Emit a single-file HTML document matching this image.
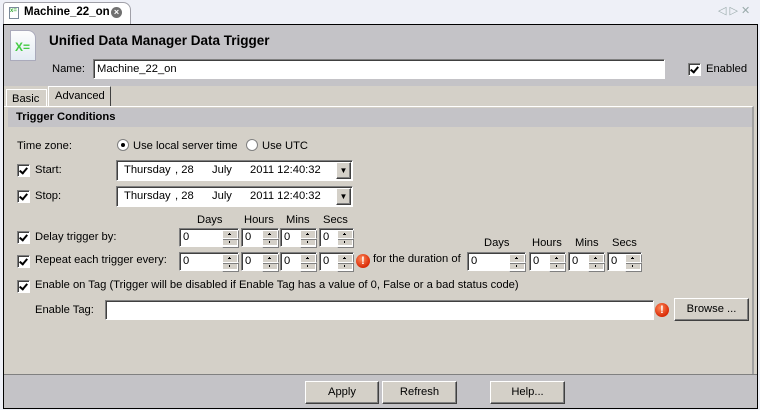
<!DOCTYPE html>
<html><head><style>
*{box-sizing:border-box;margin:0;padding:0}
body{width:760px;height:410px;position:relative;background:#eef0f7;font-family:"Liberation Sans",sans-serif;font-size:11.2px;color:#000;overflow:hidden}
.a{position:absolute;white-space:nowrap}
.in{position:absolute;background:#fff;border:1px solid;border-color:#808080 #fff #fff #808080;box-shadow:inset 1px 1px 0 #404040}
.cb{position:absolute;width:13px;height:13px;background:#fff;border:1px solid;border-color:#808080 #fff #fff #808080;box-shadow:inset 1px 1px 0 #404040}
.cb:after{content:"";position:absolute;left:3px;top:1px;width:3px;height:6px;border:solid #000;border-width:0 2px 2px 0;transform:rotate(40deg)}
.btn{position:absolute;background:#d4d0c8;border:1px solid;border-color:#fff #404040 #404040 #fff;box-shadow:inset -1px -1px 0 #808080;text-align:center;line-height:20px}
.sp{position:absolute;background:#fff;border:1px solid;border-color:#808080 #fff #fff #808080;box-shadow:inset 1px 1px 0 #404040;height:19px;padding-left:3px;line-height:17px}
.sp i{position:absolute;right:1px;top:1px;width:15px;height:15px;background:#d4d0c8}
.sp i:before,.sp i:after{content:"";position:absolute;left:0;width:15px;height:8px;border:1px solid;border-color:#fff #808080 #808080 #fff}
.sp i:before{top:0}.sp i:after{top:8px}
.sp u{position:absolute;right:7px;width:3px;height:1px;background:#000;z-index:2}
.sp u+u{width:1px;right:8px}
.warn{position:absolute;width:14px;height:14px;border-radius:50%;background:radial-gradient(circle at 40% 35%,#ff8a5a,#d92a06 70%);color:#fff;font-weight:bold;font-size:11px;text-align:center;line-height:14px}
</style></head><body>
<div class="a" style="left:3px;top:2px;width:128px;height:23px;background:#fff;border:1px solid #a0a0a8;border-bottom:none;border-radius:3px 8px 0 0"></div>
<div class="a" style="left:9px;top:7px;width:10px;height:12px;border:1px solid #7a8a9a;background:#fff"></div>
<div class="a" style="left:10px;top:8px;font-size:6px;color:#3a3;font-weight:bold">x=</div>
<div class="a" style="left:24px;top:6px;font-weight:bold;font-size:11.5px">Machine_22_on</div>
<div class="a" style="left:111px;top:7px;width:11px;height:11px;border-radius:50%;background:#707070;color:#fff;font-size:9px;line-height:11px;text-align:center;font-weight:bold">×</div>
<div class="a" style="left:718px;top:4px;color:#9aa;font-size:11px">◁ ▷ ✕</div>
<div class="a" style="left:3px;top:24px;width:755px;height:385px;border:1px solid #000;background:#c4c3c7"></div>
<div class="a" style="left:10px;top:30px;width:26px;height:31px;background:linear-gradient(#fdfdfd,#e4ecf4);border:1px solid #aab;border-radius:0 8px 0 0"></div>
<div class="a" style="left:15px;top:40px;font-size:12px;font-weight:bold;color:#4c4">X=</div>
<div class="a" style="left:49px;top:33px;font-size:13.5px;font-weight:bold">Unified Data Manager Data Trigger</div>
<div class="a" style="left:52px;top:63px">Name:</div>
<div class="in" style="left:93px;top:59px;width:572px;height:20px;padding:3px 3px">Machine_22_on</div>
<div class="cb" style="left:688px;top:63px"></div>
<div class="a" style="left:706px;top:63px">Enabled</div>
<div class="a" style="left:4px;top:86px;width:753px;height:288px;background:#d4d0c8"></div>
<div class="a" style="left:6px;top:89px;width:41px;height:18px;border:1px solid #fff;border-bottom:none;padding:3px 0 0 5px">Basic</div>
<div class="a" style="left:48px;top:86px;width:63px;height:21px;border:1px solid;border-color:#fff #404040 transparent #fff;background:#d4d0c8;padding:3px 0 0 6px">Advanced</div>
<div class="a" style="left:4px;top:106px;width:750px;height:268px;border-top:1px solid #fff;border-right:2px solid #a0a0a0"></div>
<div class="a" style="left:8px;top:108px;width:744px;height:19px;background:#c4c3c7;font-weight:bold;padding:3px 0 0 8px">Trigger Conditions</div>
<div class="a" style="left:17px;top:140px">Time zone:</div>
<div class="a" style="left:117px;top:139px;width:12px;height:12px;border-radius:50%;background:#fff;border:1px solid #808080"></div>
<div class="a" style="left:121px;top:143px;width:4px;height:4px;border-radius:50%;background:#000"></div>
<div class="a" style="left:133px;top:140px">Use local server time</div>
<div class="a" style="left:246px;top:139px;width:12px;height:12px;border-radius:50%;background:#fff;border:1px solid #808080"></div>
<div class="a" style="left:262px;top:140px">Use UTC</div>
<div class="cb" style="left:17px;top:164px"></div><div class="a" style="left:35px;top:164px">Start:</div>
<div class="in" style="left:116px;top:160px;width:237px;height:21px"></div>
<div class="a" style="left:124px;top:164px">Thursday</div><div class="a" style="left:175px;top:164px">, 28</div><div class="a" style="left:212px;top:164px">July</div><div class="a" style="left:250px;top:164px">2011 12:40:32</div>
<div class="btn" style="left:336px;top:162px;width:15px;height:17px;font-size:8px;line-height:15px">▼</div>
<div class="cb" style="left:17px;top:190px"></div><div class="a" style="left:35px;top:190px">Stop:</div>
<div class="in" style="left:116px;top:186px;width:237px;height:21px"></div>
<div class="a" style="left:124px;top:190px">Thursday</div><div class="a" style="left:175px;top:190px">, 28</div><div class="a" style="left:212px;top:190px">July</div><div class="a" style="left:250px;top:190px">2011 12:40:32</div>
<div class="btn" style="left:336px;top:188px;width:15px;height:17px;font-size:8px;line-height:15px">▼</div>
<div class="a" style="left:197px;top:214px">Days</div>
<div class="a" style="left:244px;top:214px">Hours</div>
<div class="a" style="left:286px;top:214px">Mins</div>
<div class="a" style="left:323px;top:214px">Secs</div>
<div class="cb" style="left:17px;top:231px"></div><div class="a" style="left:35px;top:231px">Delay trigger by:</div>
<div class="sp" style="left:179px;top:228px;width:60px">0<i></i><u style="top:5px"></u><u style="top:4px"></u><u style="top:12px"></u><u style="top:13px"></u></div>
<div class="sp" style="left:241px;top:228px;width:38px">0<i></i><u style="top:5px"></u><u style="top:4px"></u><u style="top:12px"></u><u style="top:13px"></u></div>
<div class="sp" style="left:280px;top:228px;width:37px">0<i></i><u style="top:5px"></u><u style="top:4px"></u><u style="top:12px"></u><u style="top:13px"></u></div>
<div class="sp" style="left:319px;top:228px;width:35px">0<i></i><u style="top:5px"></u><u style="top:4px"></u><u style="top:12px"></u><u style="top:13px"></u></div>
<div class="cb" style="left:17px;top:255px"></div><div class="a" style="left:35px;top:254px">Repeat each trigger every:</div>
<div class="sp" style="left:179px;top:252px;width:60px">0<i></i><u style="top:5px"></u><u style="top:4px"></u><u style="top:12px"></u><u style="top:13px"></u></div>
<div class="sp" style="left:241px;top:252px;width:38px">0<i></i><u style="top:5px"></u><u style="top:4px"></u><u style="top:12px"></u><u style="top:13px"></u></div>
<div class="sp" style="left:280px;top:252px;width:37px">0<i></i><u style="top:5px"></u><u style="top:4px"></u><u style="top:12px"></u><u style="top:13px"></u></div>
<div class="sp" style="left:319px;top:252px;width:35px">0<i></i><u style="top:5px"></u><u style="top:4px"></u><u style="top:12px"></u><u style="top:13px"></u></div>
<div class="warn" style="left:356px;top:254px">!</div>
<div class="a" style="left:373px;top:253px">for the duration of</div>
<div class="a" style="left:484px;top:237px">Days</div>
<div class="a" style="left:532px;top:237px">Hours</div>
<div class="a" style="left:575px;top:237px">Mins</div>
<div class="a" style="left:612px;top:237px">Secs</div>
<div class="sp" style="left:467px;top:252px;width:59px">0<i></i><u style="top:5px"></u><u style="top:4px"></u><u style="top:12px"></u><u style="top:13px"></u></div>
<div class="sp" style="left:529px;top:252px;width:37px">0<i></i><u style="top:5px"></u><u style="top:4px"></u><u style="top:12px"></u><u style="top:13px"></u></div>
<div class="sp" style="left:568px;top:252px;width:37px">0<i></i><u style="top:5px"></u><u style="top:4px"></u><u style="top:12px"></u><u style="top:13px"></u></div>
<div class="sp" style="left:607px;top:252px;width:35px">0<i></i><u style="top:5px"></u><u style="top:4px"></u><u style="top:12px"></u><u style="top:13px"></u></div>
<div class="cb" style="left:17px;top:280px"></div>
<div class="a" style="left:35px;top:279px">Enable on Tag (Trigger will be disabled if Enable Tag has a value of 0, False or a bad status code)</div>
<div class="a" style="left:35px;top:304px">Enable Tag:</div>
<div class="in" style="left:105px;top:300px;width:549px;height:20px"></div>
<div class="warn" style="left:655px;top:303px">!</div>
<div class="btn" style="left:674px;top:298px;width:75px;height:23px">Browse ...</div>
<div class="a" style="left:4px;top:374px;width:753px;height:1px;background:#808080"></div>
<div class="btn" style="left:305px;top:381px;width:74px;height:23px">Apply</div>
<div class="btn" style="left:382px;top:381px;width:75px;height:23px">Refresh</div>
<div class="btn" style="left:490px;top:381px;width:75px;height:23px">Help...</div>
</body></html>
